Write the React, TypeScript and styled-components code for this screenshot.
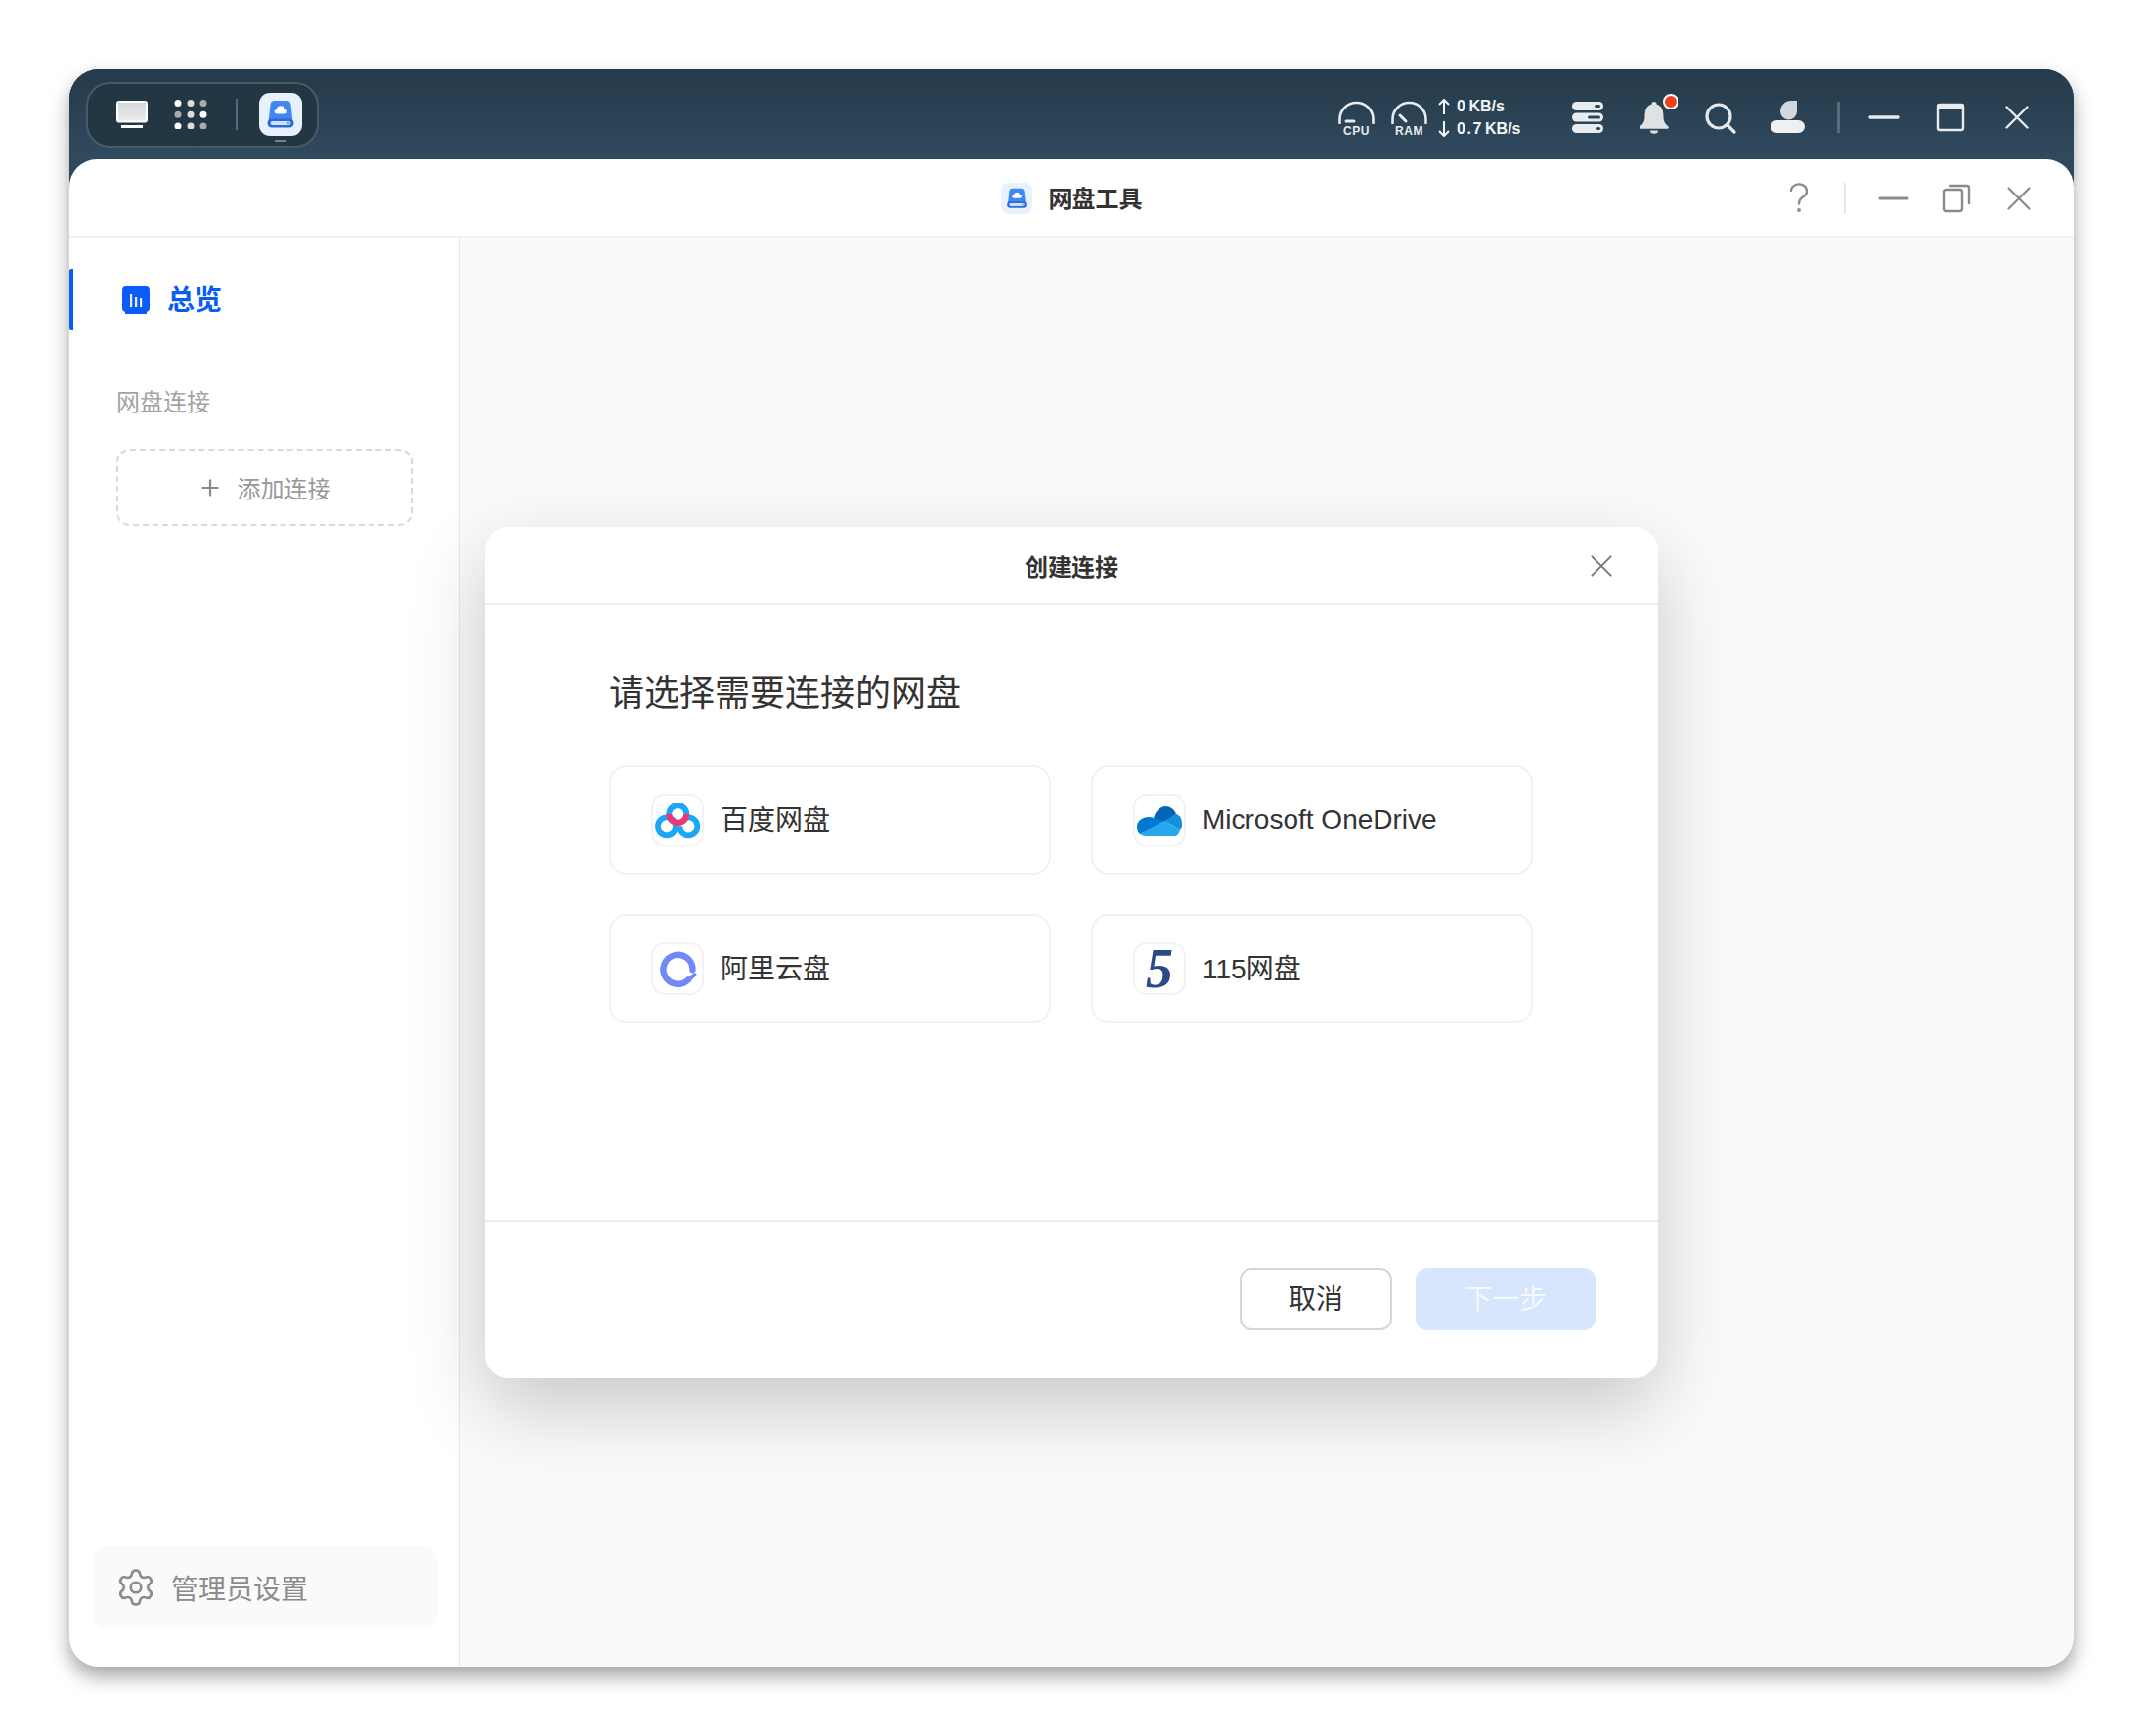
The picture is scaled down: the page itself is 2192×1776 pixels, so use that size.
import React from 'react';
import styled, { createGlobalStyle } from 'styled-components';
import { Settings, Plus } from 'lucide-react';

const GlobalStyle = createGlobalStyle`
  html, body {
    margin: 0;
    padding: 0;
    background: #ffffff;
    font-family: "Liberation Sans", "Noto Sans CJK SC", sans-serif;
    color: #333333;
  }
  * {
    box-sizing: border-box;
  }
`;

const Page = styled.div`
  width: 2192px;
  height: 1776px;
  padding: 71px;
`;

const Shell = styled.div`
  width: 2050px;
  height: 1634px;
  display: flex;
  flex-direction: column;
  border-radius: 30px;
  background: #2f485c;
  box-shadow: 0 10px 20px rgba(0, 0, 0, 0.36);
  overflow: hidden;
`;

const TopBar = styled.div`
  height: 92px;
  flex: none;
  display: flex;
  align-items: center;
  justify-content: space-between;
  padding: 0 34px 0 17px;
  background: linear-gradient(180deg, #253a4a 0%, #304a5e 100%);
`;

const Dock = styled.div`
  width: 238px;
  height: 67px;
  display: flex;
  align-items: center;
  gap: 27px;
  padding-left: 29px;
  border: 2px solid #475a68;
  border-radius: 24px;
  background: #233644;
`;

const DockDivider = styled.div`
  width: 2px;
  height: 32px;
  margin: 0 -5px 0 2px;
  background: #56687a;
`;

const DockApp = styled.div`
  position: relative;
  display: flex;

  &::after {
    content: '';
    position: absolute;
    left: 16px;
    bottom: -6px;
    width: 12px;
    height: 2px;
    background: #76858f;
  }
`;

const Tray = styled.div`
  display: flex;
  align-items: center;
  margin-top: 5px;
`;

const Meter = styled.div`
  width: 39px;
  margin-right: 15px;
  display: flex;
  flex-direction: column;
  align-items: center;
  margin-top: 4px;
`;

const MeterLabel = styled.span`
  font-size: 12px;
  line-height: 12px;
  margin-top: 1px;
  font-weight: 700;
  letter-spacing: 0.6px;
  color: #e8ecef;
`;

const Net = styled.div`
  width: 90px;
  margin: 2px 40px 0 -6px;
  display: flex;
  flex-direction: column;
  gap: 3px;
`;

const NetRow = styled.div`
  display: flex;
  align-items: center;
  gap: 6px;
  height: 20px;
  font-size: 16px;
  font-weight: 700;
  color: #f2f4f5;
`;

const NetValue = styled.span`
  letter-spacing: 1.6px;
  margin-right: -4px;
`;

const TrayIcons = styled.div`
  display: flex;
  align-items: center;
  gap: 20px;
`;

const TrayDivider = styled.div`
  width: 3px;
  height: 32px;
  margin: 0 21px 0 27px;
  background: #5a6c79;
`;

const Panel = styled.div`
  flex: 1;
  min-height: 0;
  display: flex;
  flex-direction: column;
  background: #ffffff;
  border-radius: 28px 28px 0 0;
`;

const TitleBar = styled.div`
  height: 80px;
  flex: none;
  display: grid;
  grid-template-columns: 1fr auto 1fr;
  align-items: center;
  border-bottom: 2px solid #f2f2f2;
  padding: 1px 34px 0;
`;

const AppTitle = styled.div`
  grid-column: 2;
  display: flex;
  align-items: center;
  gap: 17px;
  font-size: 24px;
  font-weight: 700;
  color: #333333;
`;

const AppTitleText = styled.span`
  margin-top: -2px;
`;

const WindowControls = styled.div`
  grid-column: 3;
  justify-self: end;
  display: flex;
  align-items: center;
  gap: 20px;
`;

const ControlDivider = styled.div`
  width: 2px;
  height: 32px;
  margin: 0 7px;
  background: #e6e6e6;
`;

const Body = styled.div`
  position: relative;
  flex: 1;
  min-height: 0;
  display: flex;
`;

const Sidebar = styled.aside`
  width: 400px;
  flex: none;
  display: flex;
  flex-direction: column;
  padding-top: 32px;
  background: #ffffff;
  border-right: 2px solid #e8e8e8;
`;

const NavItem = styled.div`
  height: 63px;
  display: flex;
  align-items: center;
  gap: 18px;
  padding-left: 50px;
  border-left: 4px solid #0a5cf5;
  border-radius: 2px 0 0 2px;
  font-size: 28px;
  font-weight: 700;
  color: #0a5cf5;
`;

const NavText = styled.span`
  margin-top: -4px;
`;

const SectionLabel = styled.div`
  margin: 57px 0 30px 48px;
  font-size: 24px;
  line-height: 34px;
  color: #a3a3a3;
`;

const AddButton = styled.button`
  width: 303px;
  height: 79px;
  margin-left: 48px;
  display: flex;
  align-items: center;
  justify-content: center;
  gap: 15px;
  padding: 0 1px 0 0;
  border: 2px dashed #d9d9d9;
  border-radius: 14px;
  background: #ffffff;
  font-family: inherit;
  font-size: 24px;
  color: #999999;
  svg {
    color: #888888;
  }
`;

const AdminSettings = styled.div`
  width: 352px;
  height: 83px;
  margin: auto 0 40px 24px;
  display: flex;
  align-items: center;
  gap: 15px;
  padding-left: 23px;
  border-radius: 14px;
  background: #fafafa;
  font-size: 28px;
  color: #8c8c8c;
`;

const Content = styled.main`
  flex: 1;
  background: #fafafa;
`;

const Overlay = styled.div`
  position: absolute;
  inset: 0;
  display: flex;
  align-items: center;
  justify-content: center;
  pointer-events: none;
`;

const Dialog = styled.div`
  width: 1200px;
  height: 871px;
  display: flex;
  flex-direction: column;
  border-radius: 24px;
  background: #ffffff;
  box-shadow: 0 30px 80px rgba(0, 0, 0, 0.2);
  pointer-events: auto;
`;

const DialogHeader = styled.div`
  height: 80px;
  flex: none;
  display: grid;
  grid-template-columns: 1fr auto 1fr;
  align-items: center;
  padding: 2px 47px 0;
  border-bottom: 2px solid #ececec;
`;

const DialogTitle = styled.div`
  grid-column: 2;
  font-size: 24px;
  font-weight: 700;
  color: #333333;
`;

const DialogClose = styled.div`
  grid-column: 3;
  justify-self: end;
  display: flex;
`;

const DialogBody = styled.div`
  flex: 1;
  padding: 66px 127px 0;
`;

const Heading = styled.div`
  font-size: 36px;
  line-height: 50px;
  margin-bottom: 48px;
  color: #333333;
`;

const ProviderGrid = styled.div`
  display: grid;
  grid-template-columns: 452px 452px;
  column-gap: 41px;
  row-gap: 40px;
`;

const ProviderCard = styled.div`
  height: 112px;
  display: flex;
  align-items: center;
  gap: 17px;
  padding-left: 41px;
  border: 2px solid #f2f2f2;
  border-radius: 18px;
  background: #ffffff;
  font-size: 28px;
  color: #333333;
`;

const ProviderName = styled.span<{ $cjk: boolean }>`
  margin-top: ${p => (p.$cjk ? '-4px' : '0')};
`;

const ProviderLogo = styled.div`
  width: 54px;
  height: 54px;
  flex: none;
  display: flex;
  align-items: center;
  justify-content: center;
  border: 2px solid #f3f3f3;
  border-radius: 14px;

  svg {
    flex: none;
  }
`;

const FiveMark = styled.span`
  font-family: "Liberation Serif", serif;
  font-size: 56px;
  line-height: 50px;
  font-style: italic;
  font-weight: 700;
  color: #2b4a87;
`;

const DialogFooter = styled.div`
  height: 162px;
  flex: none;
  display: flex;
  justify-content: flex-end;
  gap: 24px;
  padding: 47px 64px 0 0;
  border-top: 2px solid #ececec;
`;

const FooterButton = styled.button<{ $primary?: boolean }>`
  width: ${p => (p.$primary ? '184px' : '156px')};
  height: 64px;
  padding: 0 0 3px;
  border: ${p => (p.$primary ? 'none' : '2px solid #d6d6d6')};
  border-radius: 12px;
  background: ${p => (p.$primary ? '#d7e5fd' : '#ffffff')};
  color: ${p => (p.$primary ? '#f4f8ff' : '#333333')};
  font-family: inherit;
  font-size: 28px;
`;

const DiskIcon = ({ size, bg }: { size: number; bg: string }) => (
  <svg width={size} height={size} viewBox="0 0 44 44">
    <rect width="44" height="44" rx="11" fill={bg} />
    <path d="M9.5 30 L11.5 12 a4.5 4.5 0 0 1 4.5-4 h12 a4.5 4.5 0 0 1 4.5 4 L34.5 30 Z" fill="#3f87f3" />
    <path d="M18 21.5 a2.3 2.3 0 0 1 -.3-4.6 a4.4 4.4 0 0 1 8.6-.2 a2.4 2.4 0 0 1 .3 4.8 Z" fill="#ffffff" />
    <rect x="8.5" y="26.5" width="27" height="9" rx="4.5" fill="#2f67dc" />
    <rect x="11.5" y="29" width="21" height="4" rx="2" fill="#cfe0fb" />
    <circle cx="30" cy="31" r="1.3" fill="#3ecb6c" />
  </svg>
);

const MonitorIcon = () => (
  <svg width="32" height="28" viewBox="0 0 32 28">
    <defs>
      <linearGradient id="monitorFill" x1="0" y1="0" x2="0" y2="1">
        <stop offset="0" stopColor="#d4d6d7" />
        <stop offset="1" stopColor="#eceded" />
      </linearGradient>
    </defs>
    <rect x="1" y="1" width="30" height="20.5" rx="2" fill="url(#monitorFill)" stroke="#ffffff" strokeWidth="2" />
    <rect x="5" y="25" width="22" height="3" fill="#ffffff" />
  </svg>
);

const GridIcon = () => {
  const fills = ['#ffffff', '#dddddd', '#aaaaaa', '#aaaaaa', '#dddddd', '#ffffff', '#ffffff', '#dddddd', '#aaaaaa'];
  return (
    <svg width="34" height="30" viewBox="0 0 34 30">
      {fills.map((fill, i) => (
        <circle key={i} cx={4 + (i % 3) * 13} cy={3.5 + Math.floor(i / 3) * 11.8} r="3.5" fill={fill} />
      ))}
    </svg>
  );
};

const GaugeIcon = ({ needle }: { needle: string }) => (
  <svg width="39" height="24" viewBox="0 0 39 24" fill="none" stroke="#e8ecef" strokeLinecap="round">
    <path d="M2.5 23 V19 A17 17 0 0 1 36.5 19 V23" strokeWidth="2.6" />
    <path d={needle} strokeWidth="3" />
  </svg>
);

const ArrowIcon = ({ down }: { down?: boolean }) => (
  <svg width="14" height="16" viewBox="0 0 14 16" fill="none" stroke="#f2f4f5" strokeWidth="2">
    {down ? <path d="M7 0 V15 M2 10 L7 15 L12 10" /> : <path d="M7 16 V1 M2 6 L7 1 L12 6" />}
  </svg>
);

const ServerIcon = () => (
  <svg width="48" height="48" viewBox="0 0 48 48">
    <rect x="8" y="8" width="32" height="9" rx="4.5" fill="#e9ecee" />
    <rect x="8" y="19.5" width="32" height="9" rx="4.5" fill="#e9ecee" />
    <rect x="8" y="31" width="32" height="9" rx="4.5" fill="#e9ecee" />
    <rect x="31" y="11" width="6" height="3" rx="1.5" fill="#2e4558" />
    <rect x="24" y="22.5" width="13" height="3" rx="1.5" fill="#2e4558" />
    <rect x="33" y="34" width="4" height="3" rx="1.5" fill="#2e4558" />
  </svg>
);

const BellIcon = () => (
  <svg width="48" height="48" viewBox="0 0 48 48">
    <path d="M24 8 a2.5 2.5 0 0 1 2.5 2.6 C33 12.5 33.5 19 33.5 24 c0 5 2.5 7 5 9.5 a1.3 1.3 0 0 1 -1 2.2 H10.5 a1.3 1.3 0 0 1 -1-2.2 c2.5-2.5 5-4.5 5-9.5 c0-5 .5-11.5 7-13.4 A2.5 2.5 0 0 1 24 8 Z" fill="#dfe2e4" />
    <path d="M20 37.5 h8 a4 3.2 0 0 1 -8 0 Z" fill="#dfe2e4" />
    <circle cx="41" cy="8" r="7" fill="#f0401a" stroke="#ffffff" strokeWidth="2" />
  </svg>
);

const SearchIcon = () => (
  <svg width="48" height="48" viewBox="0 0 48 48" fill="none" stroke="#e6e9eb" strokeWidth="3.2" strokeLinecap="round">
    <circle cx="22" cy="23" r="12" />
    <path d="M31 32 L38 39" />
  </svg>
);

const UserIcon = () => (
  <svg width="48" height="48" viewBox="0 0 48 48">
    <path d="M34 7 V18 a8.5 8.5 0 0 1 -17 0 a11 11 0 0 1 11-11 Z" fill="#d5d8da" />
    <rect x="7" y="27" width="35" height="13" rx="6.5" fill="#eef0f1" />
  </svg>
);

const MinimizeIcon = ({ color, weight }: { color: string; weight: number }) => (
  <svg width="48" height="48" viewBox="0 0 48 48">
    <line x1="10" y1="24" x2="38" y2="24" stroke={color} strokeWidth={weight} strokeLinecap="round" />
  </svg>
);

const MaximizeIcon = () => (
  <svg width="48" height="48" viewBox="0 0 48 48" fill="none" stroke="#e8ecef">
    <rect x="11" y="11" width="26" height="26" rx="2" strokeWidth="2.4" />
    <rect x="10" y="10" width="28" height="6" rx="2" fill="#e8ecef" strokeWidth="0" />
  </svg>
);

const CloseIcon = ({ color, size, weight }: { color: string; size: number; weight: number }) => (
  <svg width={size} height={size} viewBox="0 0 24 24" fill="none" stroke={color} strokeWidth={weight} strokeLinecap="round">
    <path d="M1.5 1.5 L22.5 22.5 M22.5 1.5 L1.5 22.5" />
  </svg>
);

const HelpIcon = () => (
  <svg width="44" height="44" viewBox="-3 0 44 44" fill="none" stroke="#8a8a8a" strokeWidth="2.4" strokeLinecap="round">
    <path d="M14 14 a8 7 0 1 1 12 6.5 c-3 2 -4 3.5 -4 7" />
    <circle cx="22" cy="34" r="0.8" fill="#8a8a8a" />
  </svg>
);

const RestoreIcon = () => (
  <svg width="44" height="44" viewBox="0 0 44 44" fill="none" stroke="#8a8a8a" strokeWidth="2.4" strokeLinejoin="round">
    <rect x="9" y="13" width="19" height="22" rx="2.5" />
    <path d="M15 9 H33 a2 2 0 0 1 2 2 V28" />
  </svg>
);

const OverviewIcon = () => (
  <svg width="28" height="28" viewBox="0 0 28 28">
    <path d="M4 0 H24 a4 4 0 0 1 4 4 V22 a4 4 0 0 1 -3 3.9 V28 H3 V25.9 A4 4 0 0 1 0 22 V4 a4 4 0 0 1 4-4 Z" fill="#0a5cf5" />
    <rect x="8" y="8" width="2.2" height="13" fill="#ffffff" opacity="0.9" />
    <rect x="13" y="11" width="2.2" height="10" fill="#ffffff" opacity="0.9" />
    <rect x="18" y="12" width="2.2" height="9" fill="#ffffff" opacity="0.9" />
  </svg>
);

const BaiduLogo = () => (
  <svg width="54" height="54" viewBox="0 0 54 54" fill="none" strokeWidth="5.8">
    <circle cx="16" cy="33.3" r="9" stroke="#1ba6f6" />
    <circle cx="27.3" cy="21" r="9" stroke="#1ba6f6" />
    <path d="M35 25 A9 9 0 1 1 29.3 33.3" stroke="#1ba6f6" />
    <path d="M18.3 21 A9 9 0 0 0 36.3 21" stroke="#f0366e" />
  </svg>
);

const OneDriveLogo = () => (
  <svg width="54" height="54" viewBox="0 0 54 54">
    <path d="M21 25 C23 17 29 13 33 13 C38 13 42 16 44 21 L32 30 Z" fill="#0364b8" />
    <path d="M21 25 C13 22 4 27 4 34 C4 37 5 39 7 41 L24 33 L32 28 Z" fill="#0078d4" />
    <path d="M44 21 C48 22 50 26 50 31 C50 33 50 35 48 37 L32 28 Z" fill="#1490df" />
    <path d="M7 41 C9 42 11 43 14 43 L43 43 C45 43 47 40 48 37 L32 28 Z" fill="#28a8ea" />
  </svg>
);

const AliyunLogo = () => (
  <svg width="54" height="54" viewBox="0 0 54 54" fill="none" stroke="#7088f8" strokeWidth="6.4" strokeLinecap="round">
    <path d="M38 38.5 A15 15 0 1 1 42.5 28" />
    <path d="M44.5 33 L39 38" strokeWidth="4" />
  </svg>
);

const providers = [
  { name: '百度网盘', cjk: true, logo: <BaiduLogo /> },
  { name: 'Microsoft OneDrive', cjk: false, logo: <OneDriveLogo /> },
  { name: '阿里云盘', cjk: true, logo: <AliyunLogo /> },
  { name: '115网盘', cjk: true, logo: <FiveMark>5</FiveMark> },
];

const App: React.FC = () => {
  return (
    <Page>
      <GlobalStyle />
      <Shell>
        <TopBar>
          <Dock>
            <MonitorIcon />
            <GridIcon />
            <DockDivider />
            <DockApp>
              <DiskIcon size={44} bg="#e8f0fc" />
            </DockApp>
          </Dock>
          <Tray>
            <Meter>
              <GaugeIcon needle="M9 21 H17" />
              <MeterLabel>CPU</MeterLabel>
            </Meter>
            <Meter>
              <GaugeIcon needle="M10 15 L16 21" />
              <MeterLabel>RAM</MeterLabel>
            </Meter>
            <Net>
              <NetRow>
                <ArrowIcon />
                <NetValue>0</NetValue>KB/s
              </NetRow>
              <NetRow>
                <ArrowIcon down />
                <NetValue>0.7</NetValue>KB/s
              </NetRow>
            </Net>
            <TrayIcons>
              <ServerIcon />
              <BellIcon />
              <SearchIcon />
              <UserIcon />
            </TrayIcons>
            <TrayDivider />
            <TrayIcons>
              <MinimizeIcon color="#e8ecef" weight={3.4} />
              <MaximizeIcon />
              <svg width="48" height="48" viewBox="-12 -12 48 48">
                <CloseIcon color="#e8ecef" size={24} weight={2.4} />
              </svg>
            </TrayIcons>
          </Tray>
        </TopBar>
        <Panel>
          <TitleBar>
            <AppTitle>
              <DiskIcon size={32} bg="#e8f1fe" />
              <AppTitleText>网盘工具</AppTitleText>
            </AppTitle>
            <WindowControls>
              <HelpIcon />
              <ControlDivider />
              <svg width="44" height="44" viewBox="2 2 44 44">
                <line x1="10" y1="24" x2="38" y2="24" stroke="#8a8a8a" strokeWidth="3" strokeLinecap="round" />
              </svg>
              <RestoreIcon />
              <svg width="44" height="44" viewBox="-10 -10 44 44">
                <CloseIcon color="#8a8a8a" size={24} weight={2.2} />
              </svg>
            </WindowControls>
          </TitleBar>
          <Body>
            <Sidebar>
              <NavItem>
                <OverviewIcon />
                <NavText>总览</NavText>
              </NavItem>
              <SectionLabel>网盘连接</SectionLabel>
              <AddButton>
                <Plus size={26} strokeWidth={2} />
                添加连接
              </AddButton>
              <AdminSettings>
                <Settings size={42} strokeWidth={1.5} />
                管理员设置
              </AdminSettings>
            </Sidebar>
            <Content />
            <Overlay>
              <Dialog>
                <DialogHeader>
                  <DialogTitle>创建连接</DialogTitle>
                  <DialogClose>
                    <CloseIcon color="#777777" size={22} weight={2.1} />
                  </DialogClose>
                </DialogHeader>
                <DialogBody>
                  <Heading>请选择需要连接的网盘</Heading>
                  <ProviderGrid>
                    {providers.map(p => (
                      <ProviderCard key={p.name}>
                        <ProviderLogo>{p.logo}</ProviderLogo>
                        <ProviderName $cjk={p.cjk}>{p.name}</ProviderName>
                      </ProviderCard>
                    ))}
                  </ProviderGrid>
                </DialogBody>
                <DialogFooter>
                  <FooterButton>取消</FooterButton>
                  <FooterButton $primary>下一步</FooterButton>
                </DialogFooter>
              </Dialog>
            </Overlay>
          </Body>
        </Panel>
      </Shell>
    </Page>
  );
};

export default App;
